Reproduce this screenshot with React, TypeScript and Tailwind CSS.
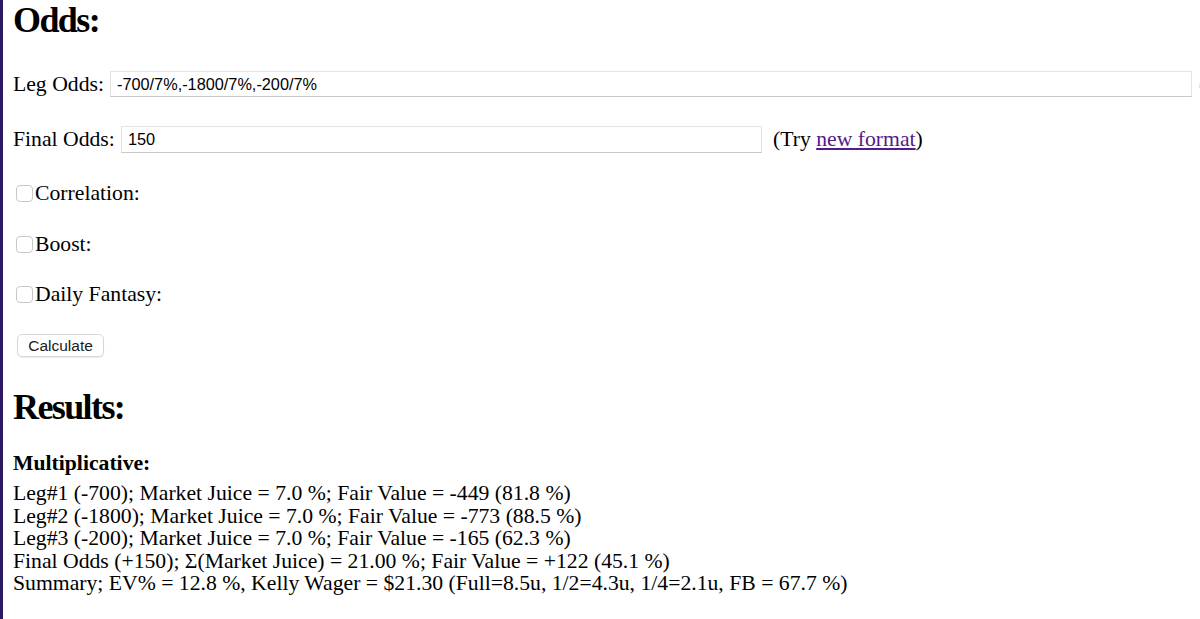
export default function App() {
  return (
    <div className="flex min-h-[619px] w-[1200px] overflow-hidden bg-white">
      {/* left accent bar */}
      <div className="w-[3px] shrink-0 bg-[#2a1860]" />

      <div className="min-w-0 flex-1 pl-[10px] font-['Liberation_Serif',serif] text-[21.7px] text-black">
        <h1 className="h-[40px] text-[36px] leading-[40px] font-bold tracking-[-1.6px]">Odds:</h1>

        {/* Leg odds */}
        <div className="mt-[31px] flex h-[26px] items-center whitespace-nowrap">
          <span className="w-[97px] shrink-0 leading-[23px]">Leg Odds:</span>
          <input
            type="text"
            defaultValue="-700/7%,-1800/7%,-200/7%"
            className="h-[26px] w-[1082px] shrink-0 border border-[#e4e4e4] border-b-[#c9c9c9] bg-white px-[6px] font-['Liberation_Sans',sans-serif] text-[16.3px] text-black outline-none"
          />
          <span className="ml-[7px] leading-[23px]">(</span>
        </div>

        {/* Final odds */}
        <div className="mt-[29px] flex h-[27px] items-center whitespace-nowrap">
          <span className="w-[108px] shrink-0 leading-[23px]">Final Odds:</span>
          <input
            type="text"
            defaultValue="150"
            className="h-[27px] w-[641px] shrink-0 border border-[#e4e4e4] border-b-[#c9c9c9] bg-white px-[6px] font-['Liberation_Sans',sans-serif] text-[16.3px] text-black outline-none"
          />
          <span className="ml-[11px] leading-[23px]">
            (Try{' '}
            <a href="#" className="text-[#551a8b] underline">
              new format
            </a>
            )
          </span>
        </div>

        {/* Options */}
        <label className="mt-[28px] flex h-[24px] items-center gap-[2px]">
          <input
            type="checkbox"
            className="ml-[3px] h-[17px] w-[17px] appearance-none rounded-[4px] border border-[#c8c8c8] bg-white"
          />
          <span className="leading-[23px]">Correlation:</span>
        </label>
        <label className="mt-[27px] flex h-[24px] items-center gap-[2px]">
          <input
            type="checkbox"
            className="ml-[3px] h-[17px] w-[17px] appearance-none rounded-[4px] border border-[#c8c8c8] bg-white"
          />
          <span className="leading-[23px]">Boost:</span>
        </label>
        <label className="mt-[26px] flex h-[24px] items-center gap-[2px]">
          <input
            type="checkbox"
            className="ml-[3px] h-[17px] w-[17px] appearance-none rounded-[4px] border border-[#c8c8c8] bg-white"
          />
          <span className="leading-[23px]">Daily Fantasy:</span>
        </label>

        <button
          type="button"
          className="mt-[28px] ml-[4px] flex h-[23px] w-[87px] items-center justify-center rounded-[5px] border border-[#d8d8d8] bg-white font-['Liberation_Sans',sans-serif] text-[15.5px] text-[#1a1a1a] shadow-[0_1px_1px_rgba(0,0,0,0.08)]"
        >
          Calculate
        </button>

        <h1 className="mt-[30px] h-[40px] text-[36px] leading-[40px] font-bold tracking-[-1.6px]">Results:</h1>

        {/* Output */}
        <div className="mt-[25px] h-[30px] leading-[22.25px] font-bold">Multiplicative:</div>
        <div className="leading-[22.5px] whitespace-nowrap">
          <div>Leg#1 (-700); Market Juice = 7.0 %; Fair Value = -449 (81.8 %)</div>
          <div>Leg#2 (-1800); Market Juice = 7.0 %; Fair Value = -773 (88.5 %)</div>
          <div>Leg#3 (-200); Market Juice = 7.0 %; Fair Value = -165 (62.3 %)</div>
          <div>Final Odds (+150); Σ(Market Juice) = 21.00 %; Fair Value = +122 (45.1 %)</div>
          <div>Summary; EV% = 12.8 %, Kelly Wager = $21.30 (Full=8.5u, 1/2=4.3u, 1/4=2.1u, FB = 67.7 %)</div>
        </div>
      </div>
    </div>
  );
}
